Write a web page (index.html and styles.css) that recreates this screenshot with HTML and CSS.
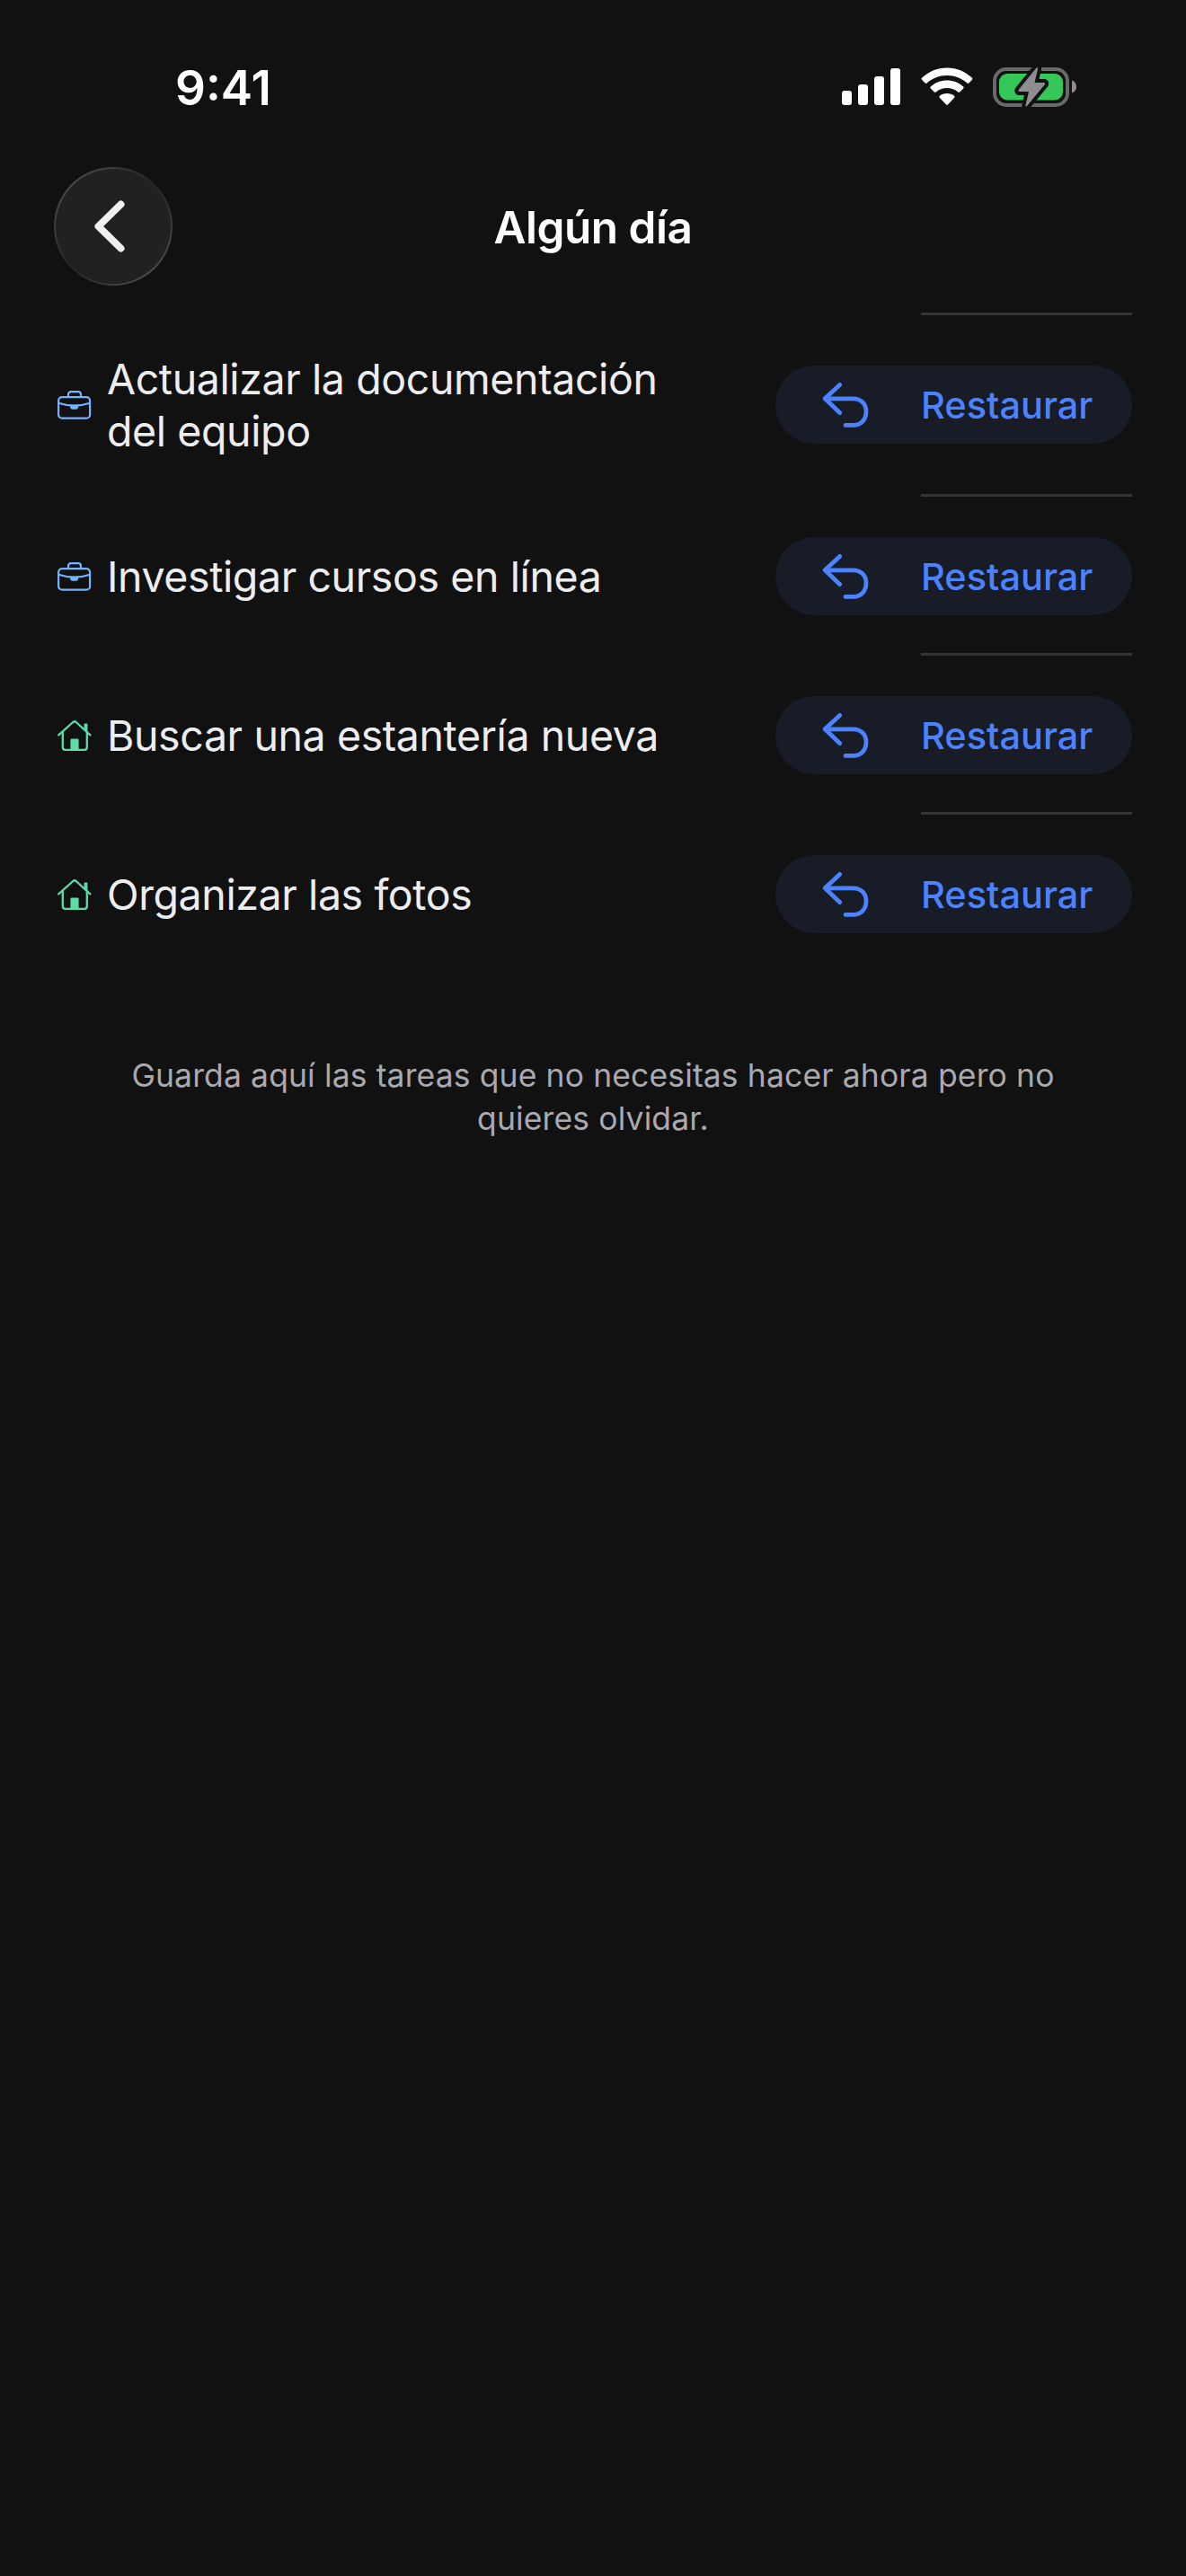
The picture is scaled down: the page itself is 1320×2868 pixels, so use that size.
FILE: index.html
```html
<!DOCTYPE html>
<html lang="es">
<head>
  <meta charset="UTF-8" />
  <meta name="viewport" content="width=device-width, initial-scale=1.0" />
  <title>Algún día</title>
  <link rel="stylesheet" href="styles.css">
</head>

<body>
  <!-- shared icons -->
  <svg class="sprite" xmlns="http://www.w3.org/2000/svg">
    <symbol id="icon-work" viewBox="0 0 38 32">
      <g fill="none" stroke="currentColor" stroke-width="2.2" stroke-linejoin="round">
        <rect x="1.1" y="7.1" width="35" height="23.6" rx="4" />
        <path d="M12 6.8V4.4Q12 1.2 15 1.2H23Q26 1.2 26 4.4V6.8" />
        <path d="M1.4 13.8Q18.6 19.6 36 13.8" />
      </g>
      <path d="M14 15.8H23.2V17.8Q23 20.8 20.6 20.8H16.6Q14.2 20.8 14 17.8Z" fill="currentColor" />
    </symbol>
    <symbol id="icon-home" viewBox="0 0 40 36">
      <g fill="none" stroke="currentColor" stroke-width="2.3" stroke-linecap="round" stroke-linejoin="round">
        <path d="M2.2 17.4L18.3 3Q20 1.6 21.7 3L37.4 17.4" />
        <path d="M6.8 14V31Q6.8 33.8 9.6 33.8H31Q33.8 33.8 33.8 31V14" />
      </g>
      <path d="M15.4 23Q15.4 21.6 16.8 21.6H23.2Q24.6 21.6 24.6 23V34H15.4Z" fill="currentColor" />
      <path d="M30.6 5.4Q30.6 4.4 31.6 4.4H33.4Q34.4 4.4 34.4 5.4V15L30.6 11.6Z" fill="currentColor" />
    </symbol>
    <symbol id="icon-undo" viewBox="0 0 52 52">
      <path d="M19.6 3.4L3.2 18.8L19.6 34.6M3.6 18.8H34.5C43.5 18.8 49 25 49 33.2C49 41.8 43.5 48.4 34.5 48.4H26" fill="none" stroke="currentColor" stroke-width="4.8" stroke-linecap="round" stroke-linejoin="round" />
    </symbol>
  </svg>

  <div class="status-bar">
    <span class="time">9:41</span>
    <div class="status-icons">
      <svg class="signal" viewBox="0 0 65 41">
        <rect x="0" y="25" width="11" height="16" rx="3" />
        <rect x="18" y="18" width="11" height="23" rx="3" />
        <rect x="36" y="9" width="11" height="32" rx="3" />
        <rect x="54" y="0" width="11" height="41" rx="3" />
      </svg>
      <svg class="wifi" viewBox="0 0 58 43">
        <path d="M29 0.4C40 0.4 50 4.8 57 11.8Q58 12.8 57 13.8L53.4 17.6Q52.4 18.4 51.4 17.6C45.4 12 37.6 9 29 9S12.6 12 6.6 17.6Q5.6 18.4 4.6 17.6L1 13.8Q0 12.8 1 11.8C8 4.8 18 0.4 29 0.4Z" />
        <path d="M29 14.6C36 14.6 42.4 17.2 47.2 21.6Q48.2 22.6 47.2 23.6L43.2 27.4Q42.2 28.2 41.2 27.4C38 24.6 33.8 23 29 23S20 24.6 16.8 27.4Q15.8 28.2 14.8 27.4L10.8 23.6Q9.8 22.6 10.8 21.6C15.6 17.2 22 14.6 29 14.6Z" />
        <path d="M29 29C32.2 29 35 30 37.2 31.8Q38.2 32.8 37.2 33.8L29.9 41.6Q29 42.4 28.1 41.6L20.8 33.8Q19.8 32.8 20.8 31.8C23 30 25.8 29 29 29Z" />
      </svg>
      <svg class="battery" viewBox="0 0 94 46">
        <rect x="2" y="3" width="81" height="40" rx="13" fill="none" stroke="#69696b" stroke-width="4" />
        <path d="M88 15.5C91 16.5 93 19 93 22.5S91 28.5 88 29.5Z" fill="#8e8e90" />
        <rect x="7" y="8" width="71" height="29.5" rx="9" fill="#36c759" />
        <path class="bolt" d="M48.5 1.5Q50.5 0.5 50 3L46.5 18H57Q59 18.5 57.5 20.5L38 44Q36 46 36.5 43L40 28H29.5Q27.5 27.5 29 25.5Z" />
      </svg>
    </div>
  </div>

  <header class="header">
    <button class="back" aria-label="Atrás">
      <svg viewBox="0 0 34 58"><path d="M29.5 4.5L4.5 29L29.5 53.5" /></svg>
    </button>
    <h1>Algún día</h1>
  </header>

  <main>
    <ul class="tasks">
      <li class="task tall">
        <svg class="icon work"><use href="#icon-work" /></svg>
        <span class="name">Actualizar la documentación<br>del equipo</span>
        <button class="restore"><svg><use href="#icon-undo" /></svg><span>Restaurar</span></button>
      </li>
      <li class="task">
        <svg class="icon work"><use href="#icon-work" /></svg>
        <span class="name">Investigar cursos en línea</span>
        <button class="restore"><svg><use href="#icon-undo" /></svg><span>Restaurar</span></button>
      </li>
      <li class="task">
        <svg class="icon home"><use href="#icon-home" /></svg>
        <span class="name">Buscar una estantería nueva</span>
        <button class="restore"><svg><use href="#icon-undo" /></svg><span>Restaurar</span></button>
      </li>
      <li class="task">
        <svg class="icon home"><use href="#icon-home" /></svg>
        <span class="name">Organizar las fotos</span>
        <button class="restore"><svg><use href="#icon-undo" /></svg><span>Restaurar</span></button>
      </li>
    </ul>
    <p class="hint">Guarda aquí las tareas que no necesitas hacer ahora pero no<br>quieres olvidar.</p>
  </main>
</body>
</html>
```
FILE: styles.css
```css
* {
  box-sizing: border-box;
}

body {
  margin: 0;
  min-height: 2868px;
  background-color: #111111;
  color: #ededf0;
  font-family: Inter, "Liberation Sans", sans-serif;
}

button {
  border: none;
  padding: 0;
  font-family: inherit;
  cursor: pointer;
}

.sprite {
  display: none;
}

/* status bar */
.status-bar {
  display: flex;
  justify-content: space-between;
  height: 186px;
  padding: 66px 121px 0 195px;
}

.time {
  color: #fff;
  font-size: 53px;
  font-weight: 600;
  line-height: 64px;
  letter-spacing: 0;
}

.status-icons {
  display: flex;
  align-items: flex-start;
  padding-top: 8px;
  fill: #fff;
}

.signal {
  width: 65px;
  height: 41px;
  margin-top: 2px;
}

.wifi {
  width: 58px;
  height: 43px;
  margin: 1px 22px 0 23px;
}

.battery {
  width: 94px;
  height: 46px;
}

.bolt {
  fill: #8e8e90;
  stroke: #111111;
  stroke-width: 8;
  stroke-linejoin: round;
  paint-order: stroke;
}

/* header */
.header {
  display: grid;
  grid-template-columns: 132px 1fr 132px;
  align-items: center;
  height: 162px;
  padding: 0 60px 30px;
}

.back {
  display: flex;
  align-items: center;
  justify-content: center;
  width: 132px;
  height: 132px;
  border-radius: 50%;
  border: 2px solid transparent;
  background: linear-gradient(#212121, #212121) padding-box,
    linear-gradient(135deg, #5a5b5a, #363737 30%, #242424 50%, #363737 70%, #5a5b5a) border-box;
}

.back svg {
  width: 34px;
  height: 58px;
  margin-right: 9px;
  fill: none;
  stroke: #f0f0f2;
  stroke-width: 8;
  stroke-linecap: round;
  stroke-linejoin: round;
}

.header h1 {
  margin: 0;
  padding-top: 2px;
  color: #fff;
  font-size: 49.5px;
  font-weight: 600;
  line-height: 60px;
  letter-spacing: -0.5px;
  text-align: center;
}

/* task list */
.tasks {
  list-style: none;
  margin: 0;
  padding: 0 60px;
}

.task {
  display: grid;
  grid-template-columns: 59px 1fr 397px;
  align-items: center;
  height: 177px;
  padding-top: 6px;
  background: linear-gradient(#353537, #353537) top right / 235px 3px no-repeat;
}

.task.tall {
  height: 202px;
  padding-top: 3px;
}

.icon {
  display: block;
  margin-left: 4px;
}

.icon.work {
  width: 38px;
  height: 32px;
  color: #75b3ff;
}

.icon.home {
  width: 40px;
  height: 36px;
  margin-left: 3px;
  color: #5edba7;
}

.name {
  font-size: 46.5px;
  line-height: 58px;
  letter-spacing: -0.4px;
}

.restore {
  display: flex;
  align-items: center;
  height: 87px;
  padding-left: 52px;
  border-radius: 44px;
  background-color: #171c27;
  color: #4d82ff;
  font-size: 41.5px;
  font-weight: 500;
}

.restore svg {
  width: 52px;
  height: 52px;
  margin-right: 58px;
}

.hint {
  margin: 93px 0 0;
  color: #a9a9af;
  font-size: 35.5px;
  line-height: 48px;
  letter-spacing: 0.12px;
  text-align: center;
}
```
